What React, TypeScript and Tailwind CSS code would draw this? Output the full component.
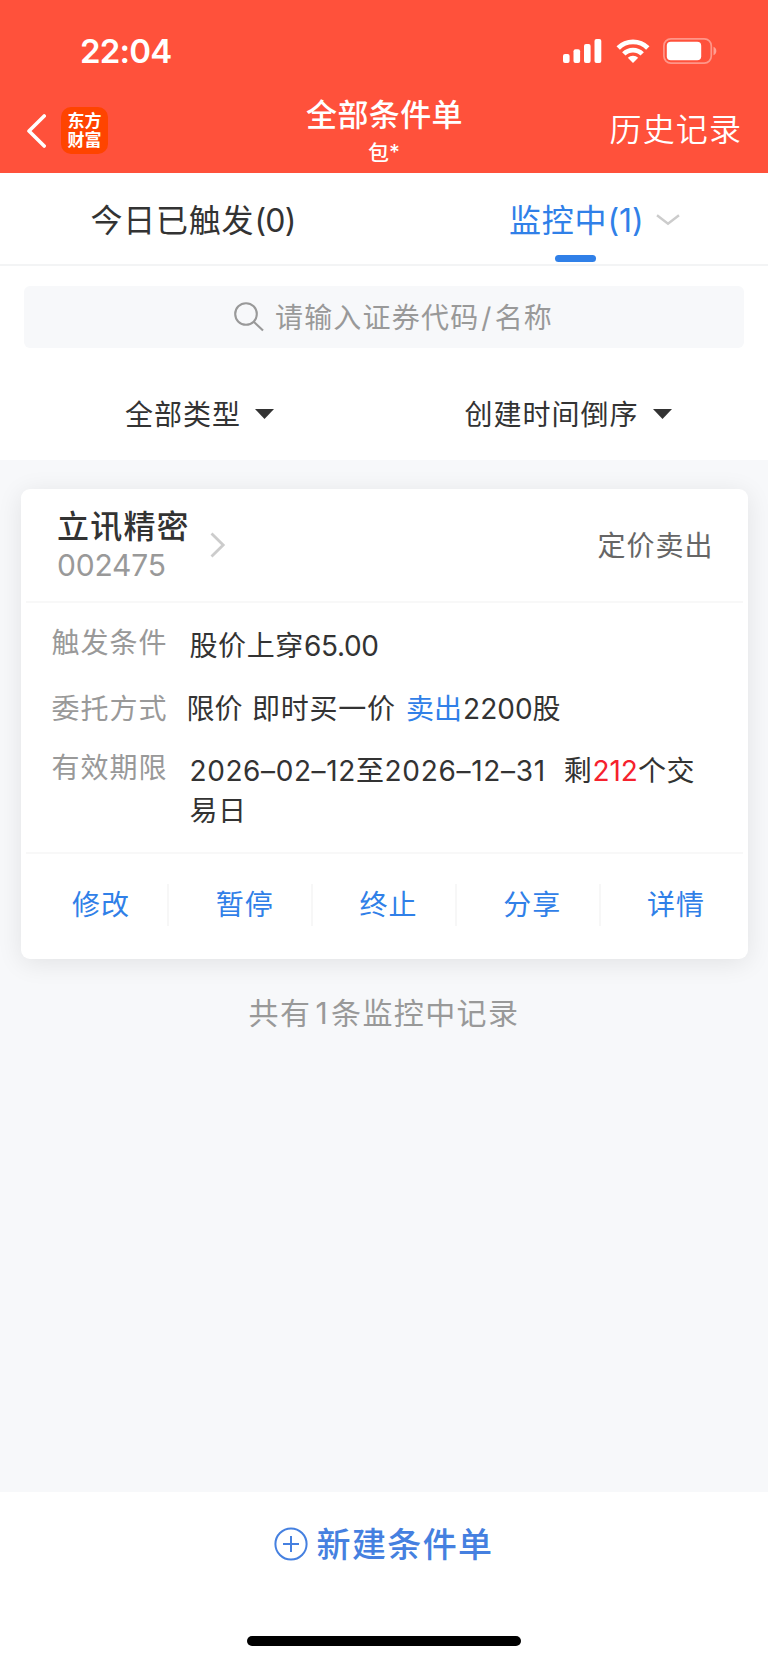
import type { ReactNode } from "react";

const actions = ["修改", "暂停", "终止", "分享", "详情"];

function StatusBar() {
  return (
    <div className="flex h-[102px] items-center justify-between pr-[51px] pl-[80px]">
      <span className="pt-px text-[33px] leading-none font-semibold tracking-[-0.8px]">
        22:04
      </span>
      <div className="flex items-center">
        <svg width="39" height="24" viewBox="0 0 39 24" fill="currentColor">
          <rect x="0" y="15" width="6.6" height="9" rx="2" />
          <rect x="10.5" y="10.3" width="6.6" height="13.7" rx="2" />
          <rect x="21" y="5" width="6.6" height="19" rx="2" />
          <rect x="31.5" y="0" width="6.8" height="24" rx="2" />
        </svg>
        <svg
          className="ml-[14px]"
          width="34"
          height="24"
          viewBox="0 0 34 24"
          fill="none"
          stroke="currentColor"
          strokeWidth="4.8"
        >
          <path d="M2.2 9 A21 21 0 0 1 31.8 9" />
          <path d="M7.8 14.9 A13 13 0 0 1 26.2 14.9" />
          <path
            d="M17 24 L11.8 18.8 A7.4 7.4 0 0 1 22.2 18.8 Z"
            fill="currentColor"
            stroke="none"
          />
        </svg>
        <svg
          className="ml-[13px]"
          width="54"
          height="26"
          viewBox="0 0 54 26"
          fill="currentColor"
        >
          <rect
            x="0.9"
            y="0.9"
            width="47.4"
            height="24.2"
            rx="7"
            fill="none"
            stroke="currentColor"
            strokeOpacity="0.4"
            strokeWidth="1.7"
          />
          <rect x="3.8" y="3.8" width="34.4" height="18.4" rx="4" />
          <path
            d="M50.5 8.8 C54.3 10.4 54.3 15.6 50.5 17.2 Z"
            fillOpacity="0.45"
          />
        </svg>
      </div>
    </div>
  );
}

function NavBar() {
  return (
    <div className="grid h-[71px] grid-cols-3 pr-[26px] pl-[26px]">
      <div className="flex h-14 items-center pt-px">
        <svg
          width="20"
          height="34"
          viewBox="0 0 20 34"
          fill="none"
          stroke="currentColor"
          strokeWidth="3.6"
          strokeLinecap="round"
          strokeLinejoin="round"
        >
          <path d="M18.2 2 L3 17 L18.2 32" />
        </svg>
        <div className="ml-[15px] flex size-[47px] items-center justify-center rounded-[10px] bg-[#ff4400] text-[17px] leading-[19px] font-bold">
          <p>
            东方
            <br />
            财富
          </p>
        </div>
      </div>
      <div className="flex flex-col items-center whitespace-nowrap">
        <h1 className="mt-[-4px] ml-px text-[31px] leading-[34px] font-medium tracking-[0.4px]">
          全部条件单
        </h1>
        <span className="mt-[9px] text-[21px] leading-6 font-medium">包*</span>
      </div>
      <div className="flex h-14 items-center justify-end text-[32px] font-[350] tracking-[1.1px]">
        历史记录
      </div>
    </div>
  );
}

function Tabs() {
  return (
    <div className="flex h-[93px] border-b-2 border-[#f3f4f5] text-[32px] tracking-[0.8px]">
      <div className="flex w-1/2 items-center justify-center pt-1 pl-0.5">
        今日已触发<span className="tracking-[-0.8px]">(0)</span>
      </div>
      <div className="flex w-1/2 flex-col text-[#3080e8]">
        <div className="flex h-[82px] items-center pt-[13px] pl-[125px]">
          监控中<span className="tracking-[-0.1px]">(1)</span>
          <svg
            className="mt-[-2px] ml-[13px]"
            width="24"
            height="12"
            viewBox="0 0 24 12"
            fill="none"
            stroke="#ccc"
            strokeWidth="2.4"
          >
            <path d="M1 1.2 L12 9.8 L23 1.2" />
          </svg>
        </div>
        <div className="ml-[171px] h-[7px] w-[41px] rounded-full bg-[#3080e8]" />
      </div>
    </div>
  );
}

function SearchBox() {
  return (
    <div className="mx-6 mt-5 flex h-[62px] items-center justify-center rounded-md bg-[#f7f8fa] pl-[19px] text-[28px] tracking-[1.2px] text-[#999]">
      <svg
        className="mr-[11px]"
        width="30"
        height="30"
        viewBox="0 0 30 30"
        fill="none"
        stroke="currentColor"
        strokeWidth="2.1"
      >
        <circle cx="12" cy="12" r="10.8" />
        <path d="M19.7 19.7 L29 28.6" />
      </svg>
      <span className="pt-px">
        请输入证券代码<span className="mx-0.5">/</span>名称
      </span>
    </div>
  );
}

function Filter({ label }: { label: string }) {
  return (
    <div className="flex items-center gap-[14px] text-[28px] tracking-[1px]">
      {label}
      <svg
        className="mt-[-2px]"
        width="19"
        height="10"
        viewBox="0 0 19 10"
        fill="#333"
      >
        <path d="M0 0 H19 L9.5 10 Z" />
      </svg>
    </div>
  );
}

function Row({ label, children }: { label: string; children: ReactNode }) {
  return (
    <div className="flex">
      <span className="w-[138px] shrink-0 leading-[41px] tracking-[1px] text-[#999]">
        {label}
      </span>
      {children}
    </div>
  );
}

function OrderCard() {
  return (
    <div className="mx-[20.5px] mt-[29px] h-[470px] rounded-[9px] bg-white px-[5px] shadow-[0_4px_26px_rgba(0,0,0,0.09)]">
      <div className="flex h-[114px] items-center justify-between border-b-2 border-[#f8f8f8] pt-0.5 pr-[29px] pl-[31.5px]">
        <div className="flex items-center">
          <div className="flex flex-col">
            <span className="text-[32px] leading-[38px] font-medium tracking-[1.2px]">
              立讯精密
            </span>
            <span className="text-[30px] leading-[38px] tracking-[-0.2px] text-[#999]">
              002475
            </span>
          </div>
          <svg
            className="mt-[-2px] ml-[20.5px]"
            width="16"
            height="26"
            viewBox="0 0 16 26"
            fill="none"
            stroke="#ccc"
            strokeWidth="2.8"
          >
            <path d="M1.5 1.5 L13.2 13 L1.5 24.5" />
          </svg>
        </div>
        <span className="text-[28px] tracking-[1px] text-[#666]">定价卖出</span>
      </div>

      <div className="h-[251px] border-b-2 border-[#f8f8f8] pt-[20px] pr-[19px] pl-[26px] text-[28px]">
        <Row label="触发条件">
          <span className="mt-[3px] leading-[41px] tracking-[0.6px]">
            股价上穿<span className="tracking-[-0.3px]">65.00</span>
          </span>
        </Row>
        <div className="mt-[22px]">
          <Row label="委托方式">
            <span className="-ml-[3px] leading-[41px]">
              限价{" "}
              <span className="ml-[1.5px] tracking-[0.8px]">即时买一价 </span>
              <span className="ml-[1.5px] text-[#3080e8]">卖出</span>
              <span className="ml-px">2200股</span>
            </span>
          </Row>
        </div>
        <div className="mt-[18px]">
          <Row label="有效期限">
            <span className="mt-[3px] leading-[40px] tracking-[0.6px]">
              2026–02–12至
              <span className="tracking-[0.7px]">2026–12–31</span>&nbsp;{" "}
              <span className="ml-px">剩</span>
              <span className="tracking-normal text-[#f5222d]">212</span>个交
              <br />
              易日
            </span>
          </Row>
        </div>
      </div>

      <div className="flex h-[101px] items-center">
        {actions.map((action) => (
          <button
            key={action}
            className="flex h-[42px] flex-1 items-center justify-center border-r-2 border-[#f7f7f7] pl-[9px] text-[28px] tracking-[1px] text-[#3080e8] last:border-r-0"
          >
            {action}
          </button>
        ))}
      </div>
    </div>
  );
}

export default function App() {
  return (
    <div className="flex h-[1663px] w-[768px] flex-col overflow-hidden bg-[#f7f8fa] font-[Inter,'Noto_Sans_CJK_SC',sans-serif] text-[#333]">
      <header className="h-[173px] bg-[#ff513b] text-white">
        <StatusBar />
        <NavBar />
      </header>

      <section className="h-[287px] bg-white">
        <Tabs />
        <SearchBox />
        <div className="mt-[35px] flex h-16 items-center">
          <div className="flex w-[399px] justify-center">
            <Filter label="全部类型" />
          </div>
          <div className="flex w-[338px] justify-center">
            <Filter label="创建时间倒序" />
          </div>
        </div>
      </section>

      <main className="flex-1">
        <OrderCard />
        <p className="mt-[33px] text-center text-[30px] leading-[42px] tracking-[1.4px] text-[#999]">
          共有<span className="mr-0.5 ml-1">1</span>条监控中记录
        </p>
      </main>

      <footer className="flex h-[171px] flex-col items-center bg-white">
        <button className="mt-[28px] mr-px flex h-12 items-center gap-[9px] text-[34px] font-medium tracking-[1.4px] text-[#4580e0]">
          <svg
            width="34"
            height="34"
            viewBox="0 0 34 34"
            fill="none"
            stroke="currentColor"
            strokeWidth="2"
          >
            <circle cx="17" cy="17" r="15.6" />
            <path d="M17 9 V25 M9 17 H25" />
          </svg>
          新建条件单
        </button>
        <div className="mt-[68px] h-[10px] w-[274px] rounded-full bg-black" />
      </footer>
    </div>
  );
}
